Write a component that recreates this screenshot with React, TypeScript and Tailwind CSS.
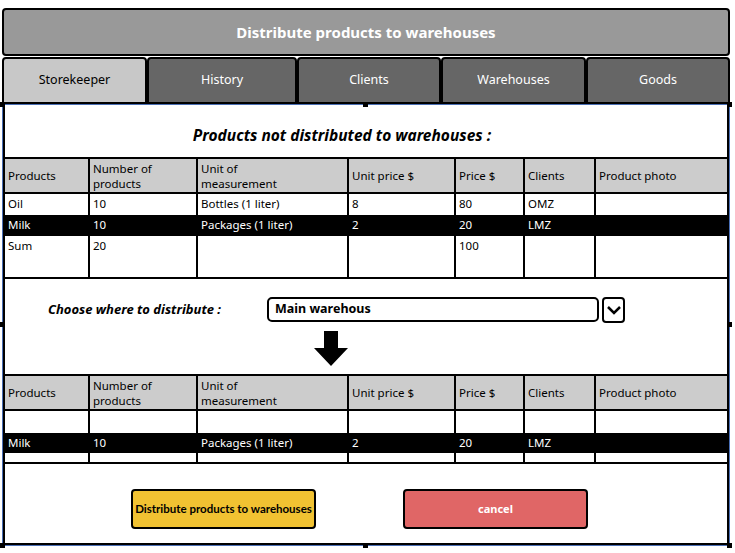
import React from "react";

const cols = "grid-cols-[85px_108px_151px_107px_69px_71px_1fr]";
const headers = ["Products", "Number of products", "Unit of measurement", "Unit price $", "Price $", "Clients", "Product photo"];

function HeaderRow() {
  return (
    <div className={`grid ${cols} h-[35px] bg-[#cccccc] border-b-2 border-black`}>
      {headers.map((h, i) => (
        <div key={i} className={`flex items-center px-[3px] leading-[15px] ${i < 6 ? "border-r-2 border-black" : ""}`}>
          <span className={i === 1 ? "w-[70px]" : i === 2 ? "w-[90px]" : ""}>{h}</span>
        </div>
      ))}
    </div>
  );
}

function Row({ cells, dark, h }: { cells: string[]; dark?: boolean; h: string }) {
  return (
    <div className={`grid ${cols} ${h} ${dark ? "bg-black text-white" : "bg-white text-black"}`}>
      {cells.map((c, i) => (
        <div key={i} className={`px-[3px] pt-[1px] leading-[17px] whitespace-nowrap ${i < 6 ? "border-r-2 border-black" : ""}`}>
          {c}
        </div>
      ))}
    </div>
  );
}

function Handle({ cls }: { cls: string }) {
  return <div className={`absolute w-[5px] h-[5px] bg-black ${cls}`} />;
}

export default function App() {
  return (
    <div className="w-[735px] h-[553px] bg-white pt-[8px] pl-[2px] text-[11.5px] text-black" style={{ fontFamily: "'Noto Sans', sans-serif" }}>
      <div className="w-[728px]">
        <div className="h-[48px] bg-[#999999] border-2 border-black rounded-[4px] flex items-center justify-center text-white font-bold text-[15px]">
          Distribute products to warehouses
        </div>
        <div className="flex h-[47px] mt-[1px]">
          {[
            ["Storekeeper", 145, true],
            ["History", 150, false],
            ["Clients", 144, false],
            ["Warehouses", 145, false],
            ["Goods", 144, false],
          ].map(([t, w, a], i) => (
            <div
              key={i}
              style={{ width: w as number }}
              className={`flex items-center justify-center text-[12.5px] border-2 border-black rounded-t-[4px] ${a ? "bg-[#c8c8c8] text-black" : "bg-[#666666] text-white"}`}
            >
              {t as string}
            </div>
          ))}
        </div>
        <div className="relative h-[442px] border border-[#4a6fb5]">
          <div className="h-full border-x-2 border-b-2 border-black flex flex-col">
            <div className="h-[52px] flex items-center justify-center pt-[10px] pr-[48px] font-bold italic text-[15.5px]">
              Products not distributed to warehouses :
            </div>
            <div className="border-y-2 border-black">
              <HeaderRow />
              <Row cells={["Oil", "10", "Bottles (1 liter)", "8", "80", "OMZ", ""]} h="h-[21px]" />
              <Row cells={["Milk", "10", "Packages (1 liter)", "2", "20", "LMZ", ""]} dark h="h-[21px]" />
              <Row cells={["Sum", "20", "", "", "100", "", ""]} h="h-[41px]" />
            </div>
            <div className="flex items-center mt-[17px] h-[27px]">
              <div className="w-[262px] pl-[43px] font-bold italic text-[13px] whitespace-nowrap">Choose where to distribute :</div>
              <div className="w-[332px] h-[25px] border-2 border-black rounded-[5px] flex items-center px-[6px] font-bold text-[12.5px]">
                Main warehous
              </div>
              <div className="ml-[3px] w-[23px] h-[26px] border-2 border-black rounded-[4px] flex items-center justify-center">
                <svg width="16" height="10" viewBox="0 0 16 10">
                  <path d="M2 2 L8 8 L14 2" fill="none" stroke="black" strokeWidth="2.5" />
                </svg>
              </div>
            </div>
            <div className="flex justify-center h-[45px] pt-[8px] pr-[70px]">
              <svg width="36" height="36" viewBox="0 0 36 36">
                <path d="M11 0 H25 V17 H35 L18 35 L1 17 H11 Z" fill="black" />
              </svg>
            </div>
            <div className="mt-[6px] border-y-2 border-black">
              <HeaderRow />
              <Row cells={["", "", "", "", "", "", ""]} h="h-[22px]" />
              <Row cells={["Milk", "10", "Packages (1 liter)", "2", "20", "LMZ", ""]} dark h="h-[20px]" />
              <Row cells={["", "", "", "", "", "", ""]} h="h-[9px]" />
            </div>
            <div className="flex mt-[25px]">
              <div
                className="ml-[126px] w-[185px] h-[40px] bg-[#f1c232] border-2 border-black rounded-[4px] flex items-center justify-center font-bold text-[11.5px] whitespace-nowrap"
                style={{ fontFamily: "Lato, 'Noto Sans', sans-serif" }}
              >
                Distribute products to warehouses
              </div>
              <div className="ml-[87px] w-[185px] h-[40px] bg-[#e06666] border-2 border-black rounded-[4px] flex items-center justify-center font-bold text-[11px] text-white">
                cancel
              </div>
            </div>
          </div>
          <Handle cls="-left-[3px] -top-[3px]" />
          <Handle cls="left-[360px] -top-[3px]" />
          <Handle cls="-right-[3px] -top-[3px]" />
          <Handle cls="-left-[3px] top-[217px]" />
          <Handle cls="-right-[3px] top-[217px]" />
          <Handle cls="-left-[3px] -bottom-[3px]" />
          <Handle cls="left-[360px] -bottom-[3px]" />
          <Handle cls="-right-[3px] -bottom-[3px]" />
        </div>
      </div>
    </div>
  );
}
